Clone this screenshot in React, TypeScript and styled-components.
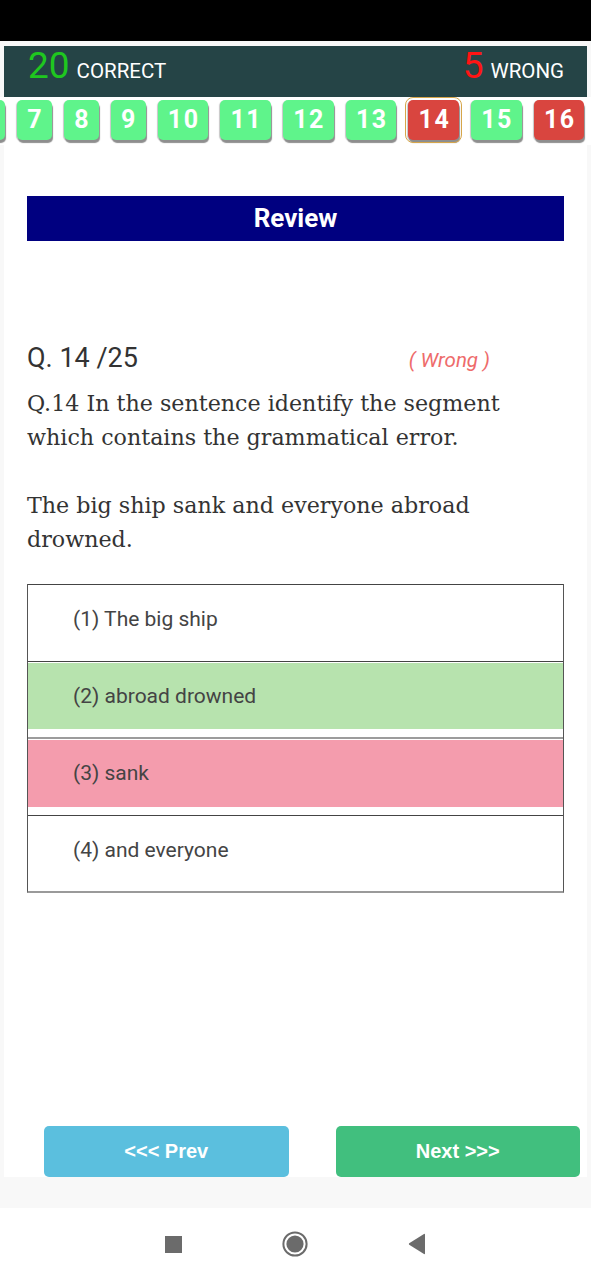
import React, { useLayoutEffect, useRef } from "react";
import styled, { createGlobalStyle, css } from "styled-components";

const GlobalStyle = createGlobalStyle`
  html, body { margin: 0; padding: 0; }
  body { font-family: Roboto, "Noto Sans", sans-serif; background: #f8f8f8; }
  * { box-sizing: border-box; }
`;

const Screen = styled.div`
  width: 591px;
  height: 1280px;
  display: flex;
  flex-direction: column;
  overflow: hidden;
`;

const StatusBar = styled.div`
  height: 41px;
  flex-shrink: 0;
  background: #000;
`;

const Main = styled.main`
  flex: 1;
  min-height: 0;
  display: flex;
  flex-direction: column;
  padding: 5px 0 31px;
  background: #f8f8f8;
`;

const ScoreBar = styled.header`
  margin: 0 4px;
  height: 51px;
  flex-shrink: 0;
  background: #254446;
  display: flex;
  align-items: flex-start;
  justify-content: space-between;
  padding: 1px 23px 0 24px;
`;

const Score = styled.div`
  display: flex;
  align-items: baseline;
  gap: 7px;
  color: #fff;
`;

const ScoreNum = styled.span<{ $tone: "good" | "bad" }>`
  font-size: 37px;
  line-height: 37px;
  color: ${(p) => (p.$tone === "good" ? "#1fc71f" : "#ff1414")};
`;

const ScoreLabel = styled.span`
  font-size: 20.5px;
`;

const Strip = styled.nav`
  flex-shrink: 0;
  display: flex;
  gap: 12px;
  overflow: hidden;
  padding: 3px 0 5px;
  background: #fff;
`;

const QButton = styled.button<{ $state: "right" | "wrong"; $current?: boolean }>`
  flex-shrink: 0;
  height: 40px;
  padding: 0 8.75px 0 10.25px;
  border: 0;
  border-radius: 5px;
  font: 700 25px/40px Roboto, sans-serif;
  letter-spacing: 1.5px;
  color: #fff;
  background: ${(p) => (p.$state === "right" ? "#5ff48b" : "#d9453f")};
  box-shadow: 1px 3px 1px #8e8e8e, -1px 1px 1px #c6c6c6;
  ${(p) =>
    p.$current &&
    css`
      outline: 1px solid #d6a64a;
      outline-offset: 2px;
    `}
`;

const Body = styled.section`
  flex: 1;
  margin: 0 4px;
  background: #fff;
  display: flex;
  flex-direction: column;
`;

const Content = styled.div`
  padding: 51px 23px 0;
  display: flex;
  flex-direction: column;
`;

const Review = styled.h2`
  margin: 0;
  height: 45px;
  background: #000080;
  color: #fff;
  font: 700 26px/45px Roboto, sans-serif;
  text-align: center;
`;

const QHead = styled.div`
  margin-top: 101px;
  display: flex;
  align-items: baseline;
`;

const QNo = styled.span`
  font-size: 27px;
  line-height: 32px;
  color: #333;
`;

const Verdict = styled.span`
  margin-left: auto;
  margin-right: 74px;
  font-size: 20.5px;
  font-style: italic;
  color: #ee6b6b;
`;

const QText = styled.p`
  margin: 12px 0 0;
  font: 22.2px/34px "DejaVu Serif", "Liberation Serif", serif;
  color: #333;
`;

const Options = styled.div`
  margin-top: 28px;
  border-left: 1px solid #555;
  border-right: 1px solid #555;
  border-bottom: 2px solid #9a9a9a;
`;

const OptionRow = styled.div<{ $rule?: "dark" | "light" }>`
  border-top: ${(p) => (p.$rule === "light" ? "2px solid #9c9c9c" : "1px solid #444")};
  padding: 1px 0 8px;
`;

const OptionFill = styled.div<{ $mark?: "right" | "wrong" }>`
  height: 66.5px;
  display: flex;
  align-items: center;
  padding-left: 45px;
  font-size: 21px;
  color: #444;
  background: ${(p) =>
    p.$mark === "right" ? "#b7e3ae" : p.$mark === "wrong" ? "#f49cad" : "#fff"};
`;

const Footer = styled.div`
  margin-top: auto;
  display: grid;
  grid-template-columns: 1fr 1fr;
`;

const NavButton = styled.button<{ $kind: "prev" | "next" }>`
  height: 51px;
  margin: 0 7px 0 40px;
  border: 0;
  border-radius: 5px;
  color: #fff;
  font: 700 20px "Liberation Sans", Arial, sans-serif;
  background: ${(p) => (p.$kind === "prev" ? "#5bbfde" : "#41bf7e")};
`;

const SystemNav = styled.div`
  height: 72px;
  flex-shrink: 0;
  background: #fff;
  display: flex;
  align-items: center;
  justify-content: center;
  gap: 100px;
`;

const statuses: Record<number, "right" | "wrong"> = {};
for (let i = 1; i <= 25; i++) statuses[i] = [3, 5, 14, 16, 21].includes(i) ? "wrong" : "right";

const options = [
  { text: "(1) The big ship" },
  { text: "(2) abroad drowned", mark: "right" as const },
  { text: "(3) sank", mark: "wrong" as const, rule: "light" as const },
  { text: "(4) and everyone" },
];

export default function App() {
  const stripRef = useRef<HTMLElement>(null);
  const anchorRef = useRef<HTMLButtonElement>(null);

  useLayoutEffect(() => {
    const strip = stripRef.current;
    const anchor = anchorRef.current;
    if (!strip || !anchor) return;
    strip.scrollLeft +=
      anchor.getBoundingClientRect().left - strip.getBoundingClientRect().left - 17;
  }, []);

  return (
    <Screen>
      <GlobalStyle />
      <StatusBar />
      <Main>
        <ScoreBar>
          <Score>
            <ScoreNum $tone="good">20</ScoreNum>
            <ScoreLabel>CORRECT</ScoreLabel>
          </Score>
          <Score>
            <ScoreNum $tone="bad">5</ScoreNum>
            <ScoreLabel>WRONG</ScoreLabel>
          </Score>
        </ScoreBar>
        <Strip ref={stripRef}>
          {Array.from({ length: 25 }, (_, i) => i + 1).map((n) => (
            <QButton
              key={n}
              ref={n === 7 ? anchorRef : undefined}
              $state={statuses[n]}
              $current={n === 14}
            >
              {n}
            </QButton>
          ))}
        </Strip>
        <Body>
          <Content>
            <Review>Review</Review>
            <QHead>
              <QNo>Q. 14 /25</QNo>
              <Verdict>( Wrong )</Verdict>
            </QHead>
            <QText>
              Q.14 In the sentence identify the segment
              <br />
              which contains the grammatical error.
              <br />
              <br />
              The big ship sank and everyone abroad
              <br />
              drowned.
            </QText>
            <Options>
              {options.map((o) => (
                <OptionRow key={o.text} $rule={o.rule}>
                  <OptionFill $mark={o.mark}>{o.text}</OptionFill>
                </OptionRow>
              ))}
            </Options>
          </Content>
          <Footer>
            <NavButton $kind="prev">&lt;&lt;&lt; Prev</NavButton>
            <NavButton $kind="next">Next &gt;&gt;&gt;</NavButton>
          </Footer>
        </Body>
      </Main>
      <SystemNav>
        <svg width="17" height="17" viewBox="0 0 17 17">
          <rect width="17" height="17" fill="#6b6b6b" />
        </svg>
        <svg width="26" height="26" viewBox="0 0 26 26">
          <circle cx="13" cy="13" r="11.6" fill="none" stroke="#6b6b6b" strokeWidth="2" />
          <circle cx="13" cy="13" r="8.6" fill="#6b6b6b" />
        </svg>
        <svg width="18" height="22" viewBox="0 0 18 22">
          <path d="M17 1.5 L17 20.5 Q17 21.5 16 21 L1.2 11.8 Q0.4 11 1.2 10.2 L16 1 Q17 0.5 17 1.5 Z" fill="#6b6b6b" />
        </svg>
      </SystemNav>
    </Screen>
  );
}
